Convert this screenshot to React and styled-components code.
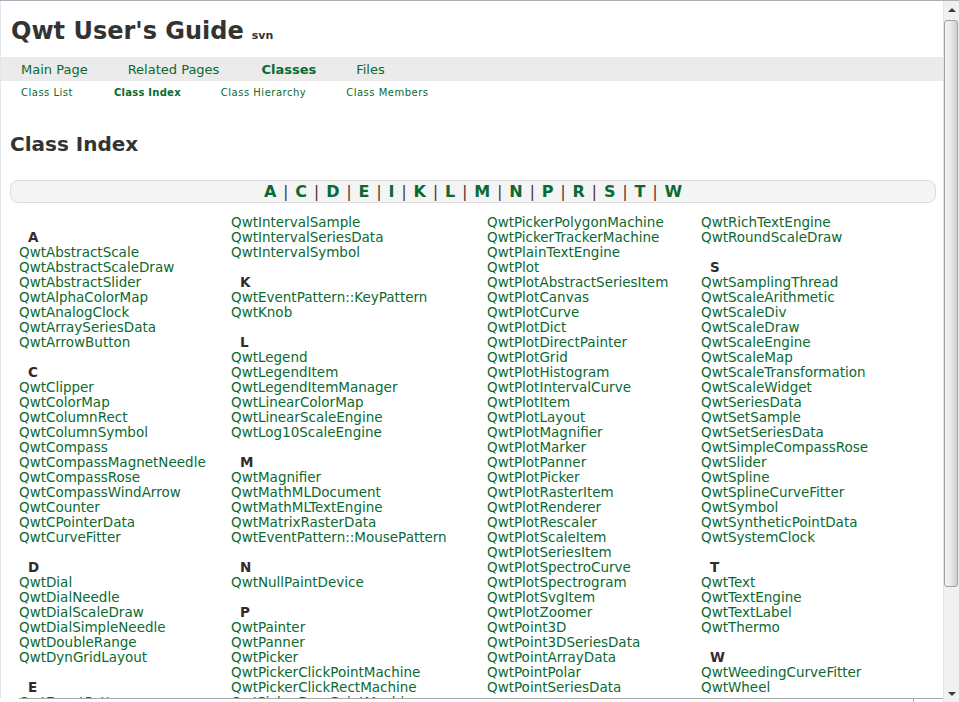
import React from "react";
import styled, { createGlobalStyle } from "styled-components";

const GlobalStyle = createGlobalStyle`
  html, body {
    margin: 0;
    padding: 0;
    background: #ffffff;
    overflow: hidden;
  }
  body {
    font-family: "DejaVu Sans", Verdana, sans-serif;
  }
`;

const GREEN = "#0a6a30";
const DARK = "#333333";

const tabs = ["Main Page", "Related Pages", "Classes", "Files"];
const subTabs = ["Class List", "Class Index", "Class Hierarchy", "Class Members"];
const letters = ["A", "C", "D", "E", "I", "K", "L", "M", "N", "P", "R", "S", "T", "W"];

// "" = empty row, { h } = letter heading, string = class link
const columns = [
  [
    "", { h: "A" },
    "QwtAbstractScale", "QwtAbstractScaleDraw", "QwtAbstractSlider", "QwtAlphaColorMap",
    "QwtAnalogClock", "QwtArraySeriesData", "QwtArrowButton",
    "", { h: "C" },
    "QwtClipper", "QwtColorMap", "QwtColumnRect", "QwtColumnSymbol", "QwtCompass",
    "QwtCompassMagnetNeedle", "QwtCompassRose", "QwtCompassWindArrow", "QwtCounter",
    "QwtCPointerData", "QwtCurveFitter",
    "", { h: "D" },
    "QwtDial", "QwtDialNeedle", "QwtDialScaleDraw", "QwtDialSimpleNeedle",
    "QwtDoubleRange", "QwtDynGridLayout",
    "", { h: "E" },
    "QwtEventPattern",
  ],
  [
    "QwtIntervalSample", "QwtIntervalSeriesData", "QwtIntervalSymbol",
    "", { h: "K" },
    "QwtEventPattern::KeyPattern", "QwtKnob",
    "", { h: "L" },
    "QwtLegend", "QwtLegendItem", "QwtLegendItemManager", "QwtLinearColorMap",
    "QwtLinearScaleEngine", "QwtLog10ScaleEngine",
    "", { h: "M" },
    "QwtMagnifier", "QwtMathMLDocument", "QwtMathMLTextEngine", "QwtMatrixRasterData",
    "QwtEventPattern::MousePattern",
    "", { h: "N" },
    "QwtNullPaintDevice",
    "", { h: "P" },
    "QwtPainter", "QwtPanner", "QwtPicker", "QwtPickerClickPointMachine",
    "QwtPickerClickRectMachine", "QwtPickerDragPointMachine",
  ],
  [
    "QwtPickerPolygonMachine", "QwtPickerTrackerMachine", "QwtPlainTextEngine", "QwtPlot",
    "QwtPlotAbstractSeriesItem", "QwtPlotCanvas", "QwtPlotCurve", "QwtPlotDict",
    "QwtPlotDirectPainter", "QwtPlotGrid", "QwtPlotHistogram", "QwtPlotIntervalCurve",
    "QwtPlotItem", "QwtPlotLayout", "QwtPlotMagnifier", "QwtPlotMarker", "QwtPlotPanner",
    "QwtPlotPicker", "QwtPlotRasterItem", "QwtPlotRenderer", "QwtPlotRescaler",
    "QwtPlotScaleItem", "QwtPlotSeriesItem", "QwtPlotSpectroCurve", "QwtPlotSpectrogram",
    "QwtPlotSvgItem", "QwtPlotZoomer", "QwtPoint3D", "QwtPoint3DSeriesData",
    "QwtPointArrayData", "QwtPointPolar", "QwtPointSeriesData",
  ],
  [
    "QwtRichTextEngine", "QwtRoundScaleDraw",
    "", { h: "S" },
    "QwtSamplingThread", "QwtScaleArithmetic", "QwtScaleDiv", "QwtScaleDraw",
    "QwtScaleEngine", "QwtScaleMap", "QwtScaleTransformation", "QwtScaleWidget",
    "QwtSeriesData", "QwtSetSample", "QwtSetSeriesData", "QwtSimpleCompassRose",
    "QwtSlider", "QwtSpline", "QwtSplineCurveFitter", "QwtSymbol",
    "QwtSyntheticPointData", "QwtSystemClock",
    "", { h: "T" },
    "QwtText", "QwtTextEngine", "QwtTextLabel", "QwtThermo",
    "", { h: "W" },
    "QwtWeedingCurveFitter", "QwtWheel",
  ],
];

const Window = styled.div`
  display: flex;
  height: 702px;
  border-top: 1px solid #aeb0b8;
  box-sizing: border-box;
  overflow: hidden;
`;

const Main = styled.div`
  flex: 1;
  display: flex;
  flex-direction: column;
  min-width: 0;
`;

const Viewport = styled.div`
  height: 698px;
  overflow: hidden;
  border-left: 1px solid #e2e5ee;
`;

const BottomEdge = styled.div`
  height: 3px;
  margin-left: 19px;
  display: flex;
  border-top: 1px solid #a8a8a8;
  .split {
    margin-left: auto;
    width: 29px;
    border-left: 1px solid #a8a8a8;
  }
`;

const Title = styled.div`
  padding: 16px 10px 0;
  height: 28px;
  line-height: 28px;
  margin-bottom: 12px;
  font-size: 24px;
  font-weight: bold;
  color: ${DARK};
  small {
    font-size: 11px;
    margin-left: 8px;
  }
`;

const TabBar = styled.ul`
  display: flex;
  margin: 0;
  padding: 0;
  list-style: none;
  height: 24px;
  line-height: ${(p) => (p.$sub ? "24px" : "26px")};
  background: ${(p) => (p.$sub ? "transparent" : "#ebebeb")};
  font-size: ${(p) => (p.$sub ? "10px" : "13px")};
  letter-spacing: ${(p) => (p.$sub ? "0.5px" : "0")};
`;

const Tab = styled.li`
  padding: 0 20px;
  color: ${GREEN};
  font-weight: ${(p) => (p.$active ? "bold" : "normal")};
  letter-spacing: ${(p) => (p.$active && p.$sub ? "0.25px" : "inherit")};
  ${(p) => (p.$active && !p.$sub ? "padding-left: 22px;" : "")}
  ${(p) => (p.$active && p.$sub ? "padding-left: 21px;" : "")}
`;

const Heading = styled.h1`
  margin: 27px 0 0 9px;
  height: 24px;
  line-height: 24px;
  font-size: 20px;
  font-weight: bold;
  color: ${DARK};
`;

const LetterBar = styled.div`
  margin: 24px 7px 0 9px;
  height: 21px;
  line-height: 21px;
  border: 1px solid #dcdcdc;
  border-radius: 8px;
  background: #f4f4f4;
  text-align: center;
  font-size: 16px;
  color: #4a2a2a;
`;

const Letter = styled.span`
  font-weight: bold;
  color: ${GREEN};
`;

const Sep = styled.span`
  padding: 0 7px;
  font-size: 15px;
  font-weight: normal;
`;

const Index = styled.div`
  display: grid;
  grid-template-columns: 212px 256px 214px 1fr;
  margin: 12px 0 0 18px;
`;

const Column = styled.div`
  display: flex;
  flex-direction: column;
`;

const Row = styled.div`
  height: 15px;
  line-height: 15px;
  font-size: 13.5px;
  white-space: nowrap;
  color: ${(p) => (p.$head ? "#352a2a" : GREEN)};
  font-weight: ${(p) => (p.$head ? "bold" : "normal")};
  padding-left: ${(p) => (p.$head ? "9px" : "0")};
`;

const Scrollbar = styled.div`
  width: 16px;
  display: flex;
  flex-direction: column;
  background: #f0f0f0;
  border-left: 1px solid #e4e4e4;
  box-sizing: border-box;
`;

const Arrow = styled.div`
  height: 17px;
  display: flex;
  align-items: center;
  justify-content: center;
  &::before {
    content: "";
    border-left: 4px solid transparent;
    border-right: 4px solid transparent;
    ${(p) =>
      p.$down
        ? "border-top: 4px solid #3a3a3a;"
        : "border-bottom: 4px solid #3a3a3a;"}
  }
`;

const Thumb = styled.div`
  height: 565px;
  margin: 2px 1px 0 0;
  border: 1px solid #9ea0a8;
  border-radius: 3px;
  background: linear-gradient(90deg, #f4f4f4 0%, #e6e6e6 55%, #cfcfd4 100%);
`;

const Track = styled.div`
  flex: 1;
`;

const App = () => (
  <>
    <GlobalStyle />
    <Window>
      <Main>
        <Viewport>
          <Title>
            Qwt User's Guide<small>svn</small>
          </Title>
          <TabBar>
            {tabs.map((t) => (
              <Tab key={t} $active={t === "Classes"}>
                {t}
              </Tab>
            ))}
          </TabBar>
          <TabBar $sub>
            {subTabs.map((t) => (
              <Tab key={t} $sub $active={t === "Class Index"}>
                {t}
              </Tab>
            ))}
          </TabBar>
          <Heading>Class Index</Heading>
          <LetterBar>
            {letters.map((l, i) => (
              <React.Fragment key={l}>
                {i > 0 && <Sep>|</Sep>}
                <Letter>{l}</Letter>
              </React.Fragment>
            ))}
          </LetterBar>
          <Index>
            {columns.map((col, ci) => (
              <Column key={ci}>
                {col.map((item, ri) =>
                  typeof item === "object" ? (
                    <Row key={ri} $head>
                      {item.h}
                    </Row>
                  ) : (
                    <Row key={ri}>{item || "\u00a0"}</Row>
                  )
                )}
              </Column>
            ))}
          </Index>
        </Viewport>
        <BottomEdge>
          <div className="split" />
        </BottomEdge>
      </Main>
      <Scrollbar>
        <Arrow />
        <Thumb />
        <Track />
        <Arrow $down />
      </Scrollbar>
    </Window>
  </>
);

export default App;
